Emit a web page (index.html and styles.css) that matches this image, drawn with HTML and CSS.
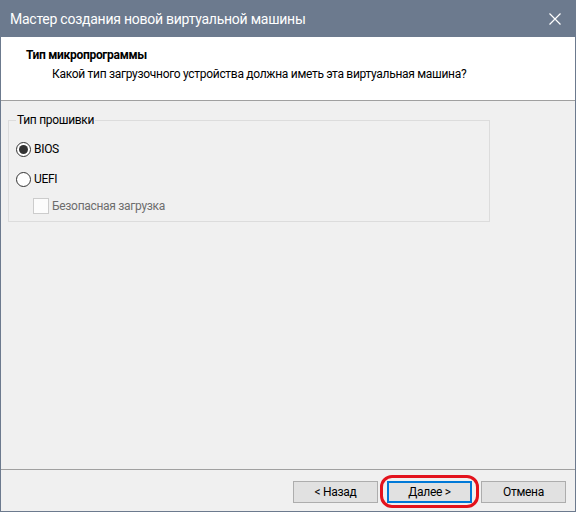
FILE: index.html
```html
<!DOCTYPE html>
<html lang="ru">
<head>
  <meta charset="UTF-8" />
  <title>Мастер создания новой виртуальной машины</title>
  <link rel="stylesheet" href="styles.css">
</head>
<body>
  <div class="window">
    <div class="titlebar">
      <span class="title">Мастер создания новой виртуальной машины</span>
      <svg class="close" width="12" height="12" viewBox="0 0 12 12">
        <path d="M0.5 0.5 L11.5 11.5 M11.5 0.5 L0.5 11.5" stroke="#fff" stroke-width="1.2" fill="none" />
      </svg>
    </div>

    <div class="header">
      <div class="header-title">Тип микропрограммы</div>
      <div class="header-sub">Какой тип загрузочного устройства должна иметь эта виртуальная машина?</div>
    </div>

    <div class="content">
      <fieldset class="group">
        <legend>Тип прошивки</legend>
        <div class="option">
          <span class="radio checked"></span>
          <span>BIOS</span>
        </div>
        <div class="option">
          <span class="radio"></span>
          <span>UEFI</span>
        </div>
        <div class="option sub disabled">
          <span class="checkbox"></span>
          <span>Безопасная загрузка</span>
        </div>
      </fieldset>
    </div>

    <div class="footer">
      <button class="btn">&lt; Назад</button>
      <span class="highlight">
        <button class="btn default">Далее &gt;</button>
      </span>
      <button class="btn">Отмена</button>
    </div>
  </div>
</body>
</html>
```

FILE: styles.css
```css
body {
  margin: 0;
  font-family: Roboto, "Noto Sans", sans-serif;
  font-size: 12px;
  letter-spacing: -0.3px;
  color: #000;
}

.window {
  width: 576px;
  height: 512px;
  box-sizing: border-box;
  border: 1px solid #6c7a8e;
  border-top: none;
  display: flex;
  flex-direction: column;
  background-color: #f0f0f0;
}

.titlebar {
  height: 37px;
  margin: 0 -1px;
  background-color: #6c7a8e;
  display: flex;
  align-items: center;
  justify-content: space-between;
  padding: 0 15px 0 10px;
}

.title {
  color: #fff;
  font-size: 14px;
  letter-spacing: -0.25px;
  margin-top: 1px;
}

.close {
  display: block;
  margin-top: 1px;
}

.header {
  height: 64px;
  background-color: #fff;
  border-bottom: 1px solid #a0a0a0;
  padding-left: 25px;
  box-sizing: border-box;
}

.header-title {
  font-weight: bold;
  margin-top: 10px;
  line-height: 16px;
}

.header-sub {
  padding-left: 26px;
  margin-top: 3px;
  line-height: 16px;
}

.content {
  flex: 1;
  padding: 11px 0 0 7px;
}

.group {
  margin: 0;
  width: 482px;
  box-sizing: border-box;
  border: 1px solid #dcdcdc;
  padding: 13px 8px 7px 7px;
  min-width: 0;
}

.group legend {
  padding: 0 1px;
  line-height: 16px;
}

.option {
  display: flex;
  align-items: center;
  gap: 3px;
  height: 16px;
  line-height: 16px;
}

.option + .option {
  margin-top: 14px;
}

.option.sub {
  margin-top: 10px;
  padding-left: 17px;
  height: 17px;
}

.disabled {
  color: #6d6d6d;
}

.radio {
  width: 15px;
  height: 15px;
  box-sizing: border-box;
  border: 1px solid #333;
  border-radius: 50%;
  background-color: #fff;
  display: flex;
  align-items: center;
  justify-content: center;
}

.radio.checked::after {
  content: "";
  width: 9px;
  height: 9px;
  border-radius: 50%;
  background-color: #333;
}

.checkbox {
  width: 16px;
  height: 16px;
  box-sizing: border-box;
  border: 1px solid #cccccc;
  background-color: #fcfcfc;
}

.footer {
  height: 42px;
  box-sizing: border-box;
  border-top: 1px solid #a0a0a0;
  display: flex;
  justify-content: flex-end;
  align-items: flex-start;
  gap: 9px;
  padding: 11px 9px 0 0;
}

.btn {
  width: 85px;
  height: 22px;
  box-sizing: border-box;
  font-family: inherit;
  font-size: 12px;
  letter-spacing: inherit;
  color: #000;
  background-color: #e1e1e1;
  border: 1px solid #adadad;
  padding: 0;
  margin: 0;
  display: block;
}

.btn.default {
  border: 2px solid #0078d7;
}

.highlight {
  position: relative;
  display: block;
}

.highlight::after {
  content: "";
  position: absolute;
  top: -6px;
  bottom: -5px;
  left: -7px;
  right: -7px;
  border: 3px solid #e3131d;
  border-radius: 12px;
  pointer-events: none;
}
```
